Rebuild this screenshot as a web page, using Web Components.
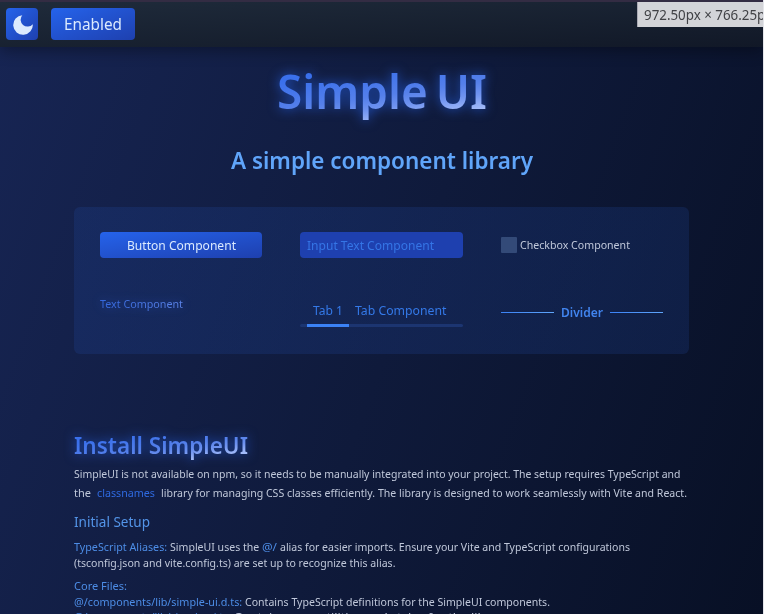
<!DOCTYPE html>
<html lang="en"><head><meta charset="utf-8"><title>Simple UI</title>
<style>
html,body{margin:0;height:614px;overflow:hidden}
body{font-family:"Noto Sans","Open Sans",sans-serif;color:#c0c8da}
</style></head><body>
<ui-app></ui-app>
<script>
const define=(name,css,html,after)=>customElements.define(name,class extends HTMLElement{
  constructor(){super();this.attachShadow({mode:'open'}).innerHTML=`<style>*{box-sizing:border-box}${css}</style>${html}`}
  connectedCallback(){if(after)after(this)}
});

// Text run whose glyphs are condensed to occupy a given advance width.
define('ui-run',`:host{display:inline-block;white-space:pre}span{display:inline-block;transform-origin:0 50%}`,`<span><slot></slot></span>`,el=>{
  const w=parseFloat(el.getAttribute('w')),span=el.shadowRoot.querySelector('span');
  const natural=span.getBoundingClientRect().width;
  el.style.width=w+'px';
  span.style.transform=`scaleX(${(w/natural).toFixed(4)})`;
});

define('ui-button',`:host{display:flex;align-items:center;justify-content:center;border-radius:4px;background:linear-gradient(to bottom right,#2563eb,#1e40af);color:#dbeafe;box-sizing:border-box}`,`<slot></slot>`);

define('ui-moon',`:host{display:block;width:20px;height:20px;margin:1px 0 0 2px}svg{display:block}`,
`<svg width="20" height="20" viewBox="0 0 20 20"><path fill="#dbeafe" d="M9.3 .2A9.8 9.8 0 1 0 19.8 9.2A6.3 6.3 0 1 1 9.3 .2Z"/></svg>`);

define('ui-toolbar',`:host{display:flex;gap:13px;align-items:flex-start;height:47px;padding:6px 6px 0;box-sizing:border-box;background:linear-gradient(to bottom right,#1f2b3b,#111827);border-top:2px solid #332c43;box-shadow:0 4px 14px #0005;position:relative}
.sq{width:32px;height:32px}.en{width:84px;height:32px;font-size:16px}
.size{position:absolute;right:0;top:0;width:126px;height:25px;overflow:hidden;background:#d3d4d8;color:#414246;font-size:14px;line-height:26px;padding-left:6px;border-left:1px solid #aaaab4;white-space:nowrap}`,
`<ui-button class="sq"><ui-moon></ui-moon></ui-button><ui-button class="en"><ui-run w="58">Enabled</ui-run></ui-button><div class="size"><ui-run w="128">972.50px × 766.25px</ui-run></div>`);

define('ui-input',`:host{display:flex;align-items:center;height:26px;border-radius:4px;background:#1e40af;color:#3575e6;padding-left:7px;font-size:12.8px;box-sizing:border-box}`,`<slot></slot>`);
define('ui-checkbox',`:host{display:flex;align-items:center;gap:3px;height:26px;font-size:11.5px}i{width:16px;height:16px;background:#334a78;border-radius:1px}::slotted(*){margin-top:-2px}`,`<i></i><slot></slot>`);
define('ui-tabs',`:host{display:block;font-size:12.8px;color:#3479e8}.r{display:flex;gap:12px;padding:0 0 2px 13px;height:27px;align-items:center}.b{height:3px;background:#1c3571;border-radius:2px;padding-left:7px}.b i{display:block;width:42px;height:3px;background:#3b82f6}`,
`<div class="r"><slot></slot></div><div class="b"><i></i></div>`);
define('ui-divider',`:host{display:flex;align-items:center;gap:7px;font-size:12.8px;font-weight:600;color:#4184ee;height:20px}i{flex:1;height:1px;background:linear-gradient(90deg,#3b82f6,#60a5fa)}`,`<i></i><slot></slot><i></i>`);
define('ui-grad',`:host{display:inline-block;background:var(--grad,linear-gradient(172deg,#3a70ec 25%,#5580ea 55%,#6f93f0 68%,#a3bbf8 84%));-webkit-background-clip:text;background-clip:text;color:transparent;filter:drop-shadow(0 0 var(--glow,6px) var(--glow-color,#2563ebcc))}`,`<slot></slot>`);

define('ui-showcase',`:host{display:grid;grid-template-columns:162px 163px 162px;column-gap:38px;grid-template-rows:26px auto;align-content:start;width:615px;height:147px;padding:25px 26px;background:linear-gradient(to right,#1d408f4a,#1d408f40);border-radius:6px;box-sizing:border-box}
.bt{height:26px;font-size:12.8px}.tx{margin-top:37px;font-size:11.5px;line-height:18px;--glow:5px;--glow-color:#2563eb70;--grad:linear-gradient(to right,#3468de,#5c84e8)}.tb{margin-top:39px}.dv{margin-top:44px}`,
`<ui-button class="bt"><ui-run w="109">Button Component</ui-run></ui-button><ui-input><ui-run w="127">Input Text Component</ui-run></ui-input><ui-checkbox><ui-run w="110">Checkbox Component</ui-run></ui-checkbox>
<ui-run class="tx" w="83"><ui-grad>Text Component</ui-grad></ui-run><ui-tabs class="tb"><ui-run w="30">Tab 1</ui-run><ui-run w="91.5">Tab Component</ui-run></ui-tabs><ui-divider class="dv"><ui-run w="42">Divider</ui-run></ui-divider>`);

define('ui-docs',`:host{display:block;width:640px;font-size:11.5px;line-height:16px}
h2{margin:0;height:32px;font-size:23px;line-height:32px;font-weight:600}h3{margin:0;font-size:13.8px;line-height:20px;font-weight:400;color:#5394e8}
p{margin:0;white-space:nowrap;display:flex}b{font-weight:400;color:#4d8de6}
.a{height:19px;line-height:19px}`,
`<h2><ui-run w="174"><ui-grad>Install SimpleUI</ui-grad></ui-run></h2>
<p class="a" style="margin-top:3px"><ui-run w="606.5">SimpleUI is not available on npm, so it needs to be manually integrated into your project. The setup requires TypeScript and</ui-run></p>
<p class="a"><ui-run w="17">the</ui-run><b style="color:#2f6ae0;margin:0 6px"><ui-run w="58">classnames</ui-run></b><ui-run w="526">library for managing CSS classes efficiently. The library is designed to work seamlessly with Vite and React.</ui-run></p>
<h3 style="margin-top:10px"><ui-run w="76">Initial Setup</ui-run></h3>
<p style="margin-top:7px"><b><ui-run w="96">TypeScript Aliases: </ui-run></b><ui-run w="92">SimpleUI uses the </ui-run><b><ui-run w="18">@/ </ui-run></b><ui-run w="350">alias for easier imports. Ensure your Vite and TypeScript configurations</ui-run></p>
<p><ui-run w="321.5">(tsconfig.json and vite.config.ts) are set up to recognize this alias.</ui-run></p>
<p style="margin-top:7px"><b><ui-run w="53">Core Files:</ui-run></b></p>
<p><b><ui-run w="171">@/components/lib/simple-ui.d.ts: </ui-run></b><ui-run w="305">Contains TypeScript definitions for the SimpleUI components.</ui-run></p>
<p style="margin-top:-1px"><b><ui-run w="160">@/components/lib/simple-ui.ts: </ui-run></b><ui-run w="278">Contains core utilities and styles for the library.</ui-run></p>`);

define('ui-app',`:host{display:block;width:764px;height:614px;overflow:hidden;box-sizing:border-box;border-right:1px solid #e4e5ea;background:linear-gradient(110deg,#172554,#0f1a3b 52%,#081025)}
main{display:flex;flex-direction:column;align-items:center}
h1{margin:12px 0 0;height:64px;font-size:46px;line-height:64px;font-weight:600;word-spacing:-4px}
.sub{margin-top:21px;height:32px;font-size:23px;line-height:32px;font-weight:600;color:#60a5fa}
ui-showcase{margin-top:31px}ui-docs{margin:75px 0 0 74px;align-self:flex-start}`,
`<ui-toolbar></ui-toolbar><main><h1><ui-run w="210"><ui-grad>Simple UI</ui-grad></ui-run></h1><div class="sub"><ui-run w="302">A simple component library</ui-run></div><ui-showcase></ui-showcase><ui-docs></ui-docs></main>`);
</script></body></html>
